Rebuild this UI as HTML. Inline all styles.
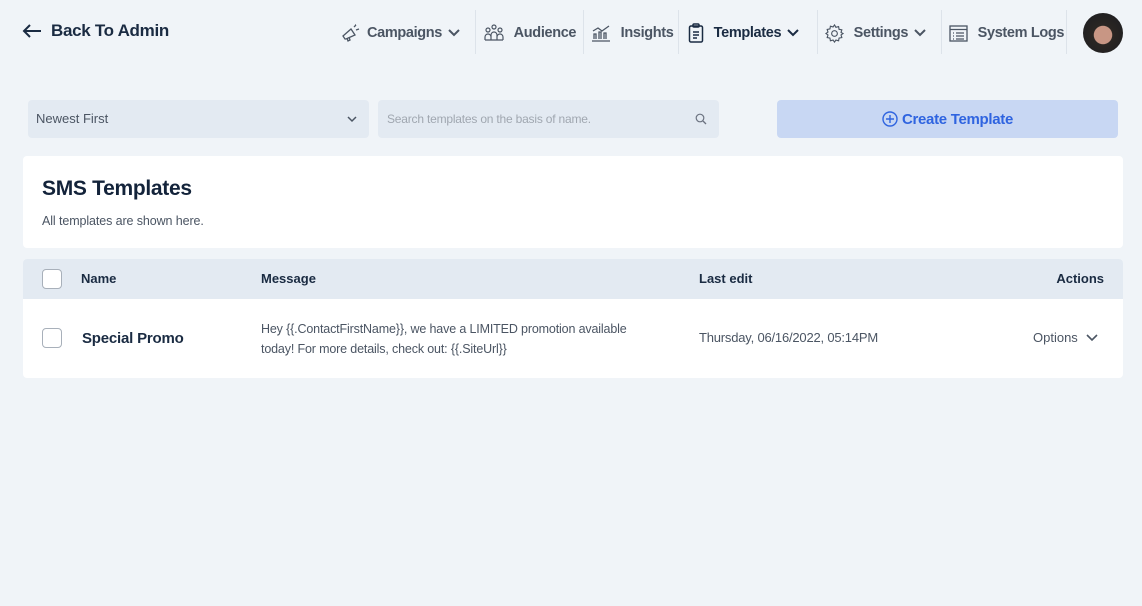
<!DOCTYPE html>
<html><head><style>
*{box-sizing:border-box;margin:0;padding:0}
body{width:1142px;height:606px;background:#f0f4f8;font-family:"Liberation Sans",sans-serif;color:#1a2b42;position:relative;overflow:hidden}
.a{position:absolute}
.nav{font-size:14.5px;font-weight:bold;color:#4b5563;display:flex;align-items:center;gap:6px;top:22px;height:22px;letter-spacing:-0.35px}
.sep{position:absolute;top:10px;width:1px;height:44px;background:#dde3ea}
svg{display:block}
.cb{width:20px;height:20px;border:1px solid #a8b0ba;border-radius:4px;background:#fff}
</style></head><body>
<div class="a" style="left:22px;top:21px;font-size:17px;font-weight:bold;display:flex;align-items:center;gap:9px;color:#1a2b42;letter-spacing:-0.3px">
<svg width="20" height="16" viewBox="0 0 20 16"><path d="M19 8H2M8 2L2 8l6 6" fill="none" stroke="#1a2b42" stroke-width="2"/></svg>Back To Admin</div>

<div class="a nav" style="left:341px"><svg width="20" height="20" viewBox="0 0 20 20" fill="none" stroke="#4b5563" stroke-width="1.3"><path d="M4 16l-2-3 8-7 4 6-9 4zM6 15l1 3 2-1-1-3M13 4l2-2M15 7l3-1M14 2l1 0"/></svg>Campaigns<svg width="12" height="8" viewBox="0 0 12 8"><path d="M1 1l5 5 5-5" fill="none" stroke="#4b5563" stroke-width="2"/></svg></div>
<div class="sep" style="left:475px"></div>
<div class="a nav" style="left:484px"><svg width="20" height="18" viewBox="0 0 20 18" fill="none" stroke="#4b5563" stroke-width="1.2"><circle cx="10" cy="3" r="2"/><circle cx="4" cy="6" r="2"/><circle cx="16" cy="6" r="2"/><path d="M1 16v-3a3 3 0 016 0v3M7 16v-5a3 3 0 016 0v5M13 16v-3a3 3 0 016 0v3M1 16h18"/></svg>&nbsp;Audience</div>
<div class="sep" style="left:583px"></div>
<div class="a nav" style="left:591px"><svg width="20" height="18" viewBox="0 0 20 18" fill="none" stroke="#4b5563" stroke-width="1.3"><path d="M1 17h18M3 15v-5h2v5M8 15V8h2v7M13 15v-6h2v6M2 7l5-3 4 3 7-5"/></svg>&nbsp;Insights</div>
<div class="sep" style="left:678px"></div>
<div class="a nav" style="left:688px;color:#1a2b42"><svg width="16" height="20" viewBox="0 0 16 20" fill="none" stroke="#1a2b42" stroke-width="1.5"><rect x="1.5" y="3" width="13" height="16" rx="1.5"/><rect x="5" y="1" width="6" height="3" rx="1"/><path d="M5 9h6M5 12h6M5 15h4"/></svg>&nbsp;Templates<svg width="12" height="8" viewBox="0 0 12 8"><path d="M1 1l5 5 5-5" fill="none" stroke="#1a2b42" stroke-width="2"/></svg></div>
<div class="sep" style="left:817px"></div>
<div class="a nav" style="left:825px"><svg width="19" height="19" viewBox="0 0 20 20" fill="none" stroke="#4b5563" stroke-width="1.2"><circle cx="10" cy="10" r="3"/><path d="M10 1l1.5 2.5 2.8-.8.5 2.9 2.9.5-.8 2.8L19 10l-2.1 1.5.8 2.8-2.9.5-.5 2.9-2.8-.8L10 19l-1.5-2.1-2.8.8-.5-2.9-2.9-.5.8-2.8L1 10l2.1-1.5-.8-2.8 2.9-.5.5-2.9 2.8.8z"/></svg>&nbsp;Settings<svg width="12" height="8" viewBox="0 0 12 8"><path d="M1 1l5 5 5-5" fill="none" stroke="#4b5563" stroke-width="2"/></svg></div>
<div class="sep" style="left:941px"></div>
<div class="a nav" style="left:949px"><svg width="19" height="17" viewBox="0 0 19 17" fill="none" stroke="#4b5563" stroke-width="1.3"><rect x="1" y="1" width="17" height="15"/><path d="M1 4.5h17M4 8h1M7 8h8M4 11h1M7 11h8M4 14h1M7 14h8"/></svg>&nbsp;System Logs</div>
<div class="sep" style="left:1066px"></div>
<div class="a" style="left:1083px;top:13px;width:40px;height:40px;border-radius:50%;background:radial-gradient(circle at 50% 55%,#c89684 0 30%,#2a2623 32%,#1b1c20 100%)"></div>

<div class="a" style="left:28px;top:100px;width:341px;height:38px;background:#e3eaf2;border-radius:4px;font-size:13px;color:#4b5563;padding:11px 8px">Newest First
<svg class="a" style="right:12px;top:16px" width="10" height="7" viewBox="0 0 10 7"><path d="M1 1l4 4 4-4" fill="none" stroke="#4b5563" stroke-width="1.5"/></svg></div>
<div class="a" style="left:378px;top:100px;width:341px;height:38px;background:#e3eaf2;border-radius:4px;font-size:12px;color:#a0a7b0;padding:12px 9px;letter-spacing:-0.2px">Search templates on the basis of name.
<svg class="a" style="right:12px;top:13px" width="12" height="12" viewBox="0 0 12 12"><circle cx="5" cy="5" r="3.8" fill="none" stroke="#6b7280" stroke-width="1.2"/><path d="M8 8l3 3" stroke="#6b7280" stroke-width="1.3"/></svg></div>
<div class="a" style="left:777px;top:100px;width:341px;height:38px;background:#c8d7f3;border-radius:4px;font-size:15px;font-weight:bold;color:#2f64e0;display:flex;align-items:center;justify-content:center;gap:4px;letter-spacing:-0.3px">
<svg width="16" height="16" viewBox="0 0 16 16" fill="none" stroke="#2f64e0" stroke-width="1.4"><circle cx="8" cy="8" r="7"/><path d="M8 4v8M4 8h8"/></svg>Create Template</div>

<div class="a" style="left:23px;top:156px;width:1100px;height:92px;background:#fff;border-radius:4px">
<div class="a" style="left:19px;top:21px;font-size:21px;font-weight:bold;color:#13233a;letter-spacing:-0.3px">SMS Templates</div>
<div class="a" style="left:19px;top:58px;font-size:12.5px;color:#4b5563;letter-spacing:-0.1px">All templates are shown here.</div></div>

<div class="a" style="left:23px;top:259px;width:1100px;height:119px;background:#fff;border-radius:4px;overflow:hidden">
<div class="a" style="left:0;top:0;width:1100px;height:40px;background:#e3eaf2"></div>
<div class="a cb" style="left:19px;top:10px"></div>
<div class="a" style="left:58px;top:12px;font-size:13px;font-weight:bold">Name</div>
<div class="a" style="left:238px;top:12px;font-size:13px;font-weight:bold">Message</div>
<div class="a" style="left:676px;top:12px;font-size:13px;font-weight:bold">Last edit</div>
<div class="a" style="right:19px;top:12px;font-size:13px;font-weight:bold">Actions</div>
<div class="a cb" style="left:19px;top:69px"></div>
<div class="a" style="left:59px;top:71px;font-size:15px;font-weight:bold;letter-spacing:-0.2px">Special Promo</div>
<div class="a" style="left:238px;top:60px;font-size:12.5px;color:#4b5563;line-height:20px;width:400px;letter-spacing:-0.15px">Hey {{.ContactFirstName}}, we have a LIMITED promotion available today! For more details, check out: {{.SiteUrl}}</div>
<div class="a" style="left:676px;top:71px;font-size:13px;color:#4b5563;letter-spacing:-0.2px">Thursday, 06/16/2022, 05:14PM</div>
<div class="a" style="left:1010px;top:71px;font-size:13px;color:#4b5563;display:flex;align-items:center;gap:8px">Options<svg width="12" height="8" viewBox="0 0 12 8"><path d="M1 1l5 5 5-5" fill="none" stroke="#4b5563" stroke-width="1.6"/></svg></div>
</div>
</body></html>
